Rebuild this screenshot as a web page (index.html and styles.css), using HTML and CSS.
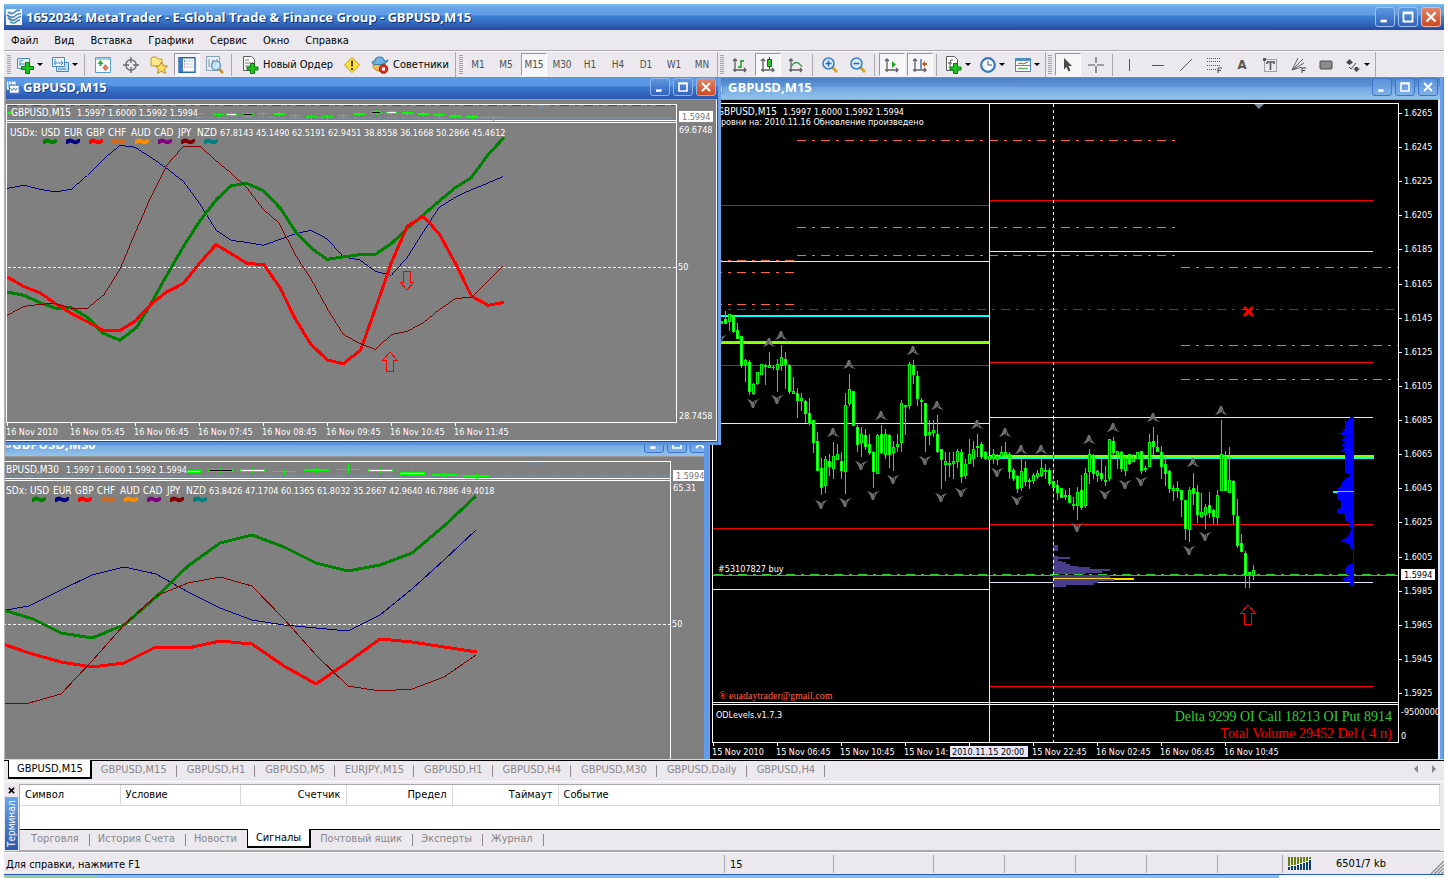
FILE: index.html
```html
<!DOCTYPE html>
<html lang="ru">
<head>
<meta charset="utf-8">
<title>1652034: MetaTrader</title>
<link rel="stylesheet" href="styles.css">
</head>
<body>
<svg class="defs" aria-hidden="true">
  <symbol id="i-min" viewBox="0 0 20 20"><path d="M5 13h7v3H5z" fill="#fff"/></symbol>
  <symbol id="i-max" viewBox="0 0 20 20"><path d="M4 4h12v12H4zM6 7v7h8V7z" fill="#fff" fill-rule="evenodd"/></symbol>
  <symbol id="i-close" viewBox="0 0 20 20"><path d="M5 5l10 10M15 5L5 15" stroke="#fff" stroke-width="2.4"/></symbol>
  <symbol id="i-mdi" viewBox="0 0 16 16"><path d="M1 2h10v9H1z" fill="#fff"/><path d="M2 5h8M3 2v7M6 2v7" stroke="#79a6d8"/><path d="M4 6h11v9H4z" fill="#fff" stroke="#3b74c2"/><path d="M5 9l2 3 2-3 2 3 2-3" fill="none" stroke="#3b74c2"/></symbol>
</svg>

<header class="titlebar">
  <svg class="app-icon" viewBox="0 0 16 16"><path d="M0 0h16v16H0z" fill="#f4f8fc"/><g fill="none" stroke="#4b86b8" stroke-width="1.7"><path d="M2 3q4 3 7 0t5-1"/><path d="M1 6q5 4 8 1t6-2"/><path d="M2 9q5 4 8 1t5-2"/><path d="M4 13q4 2 6 0t4-2"/></g></svg>
  <h1 class="title">1652034: MetaTrader - E-Global Trade &amp; Finance Group - GBPUSD,M15</h1>
  <div class="win-buttons">
    <button class="wb" aria-label="Свернуть"><svg><use href="#i-min"/></svg></button>
    <button class="wb" aria-label="Развернуть"><svg><use href="#i-max"/></svg></button>
    <button class="wb wb-close" aria-label="Закрыть"><svg><use href="#i-close"/></svg></button>
  </div>
</header>

<nav class="menubar">
  <button>Файл</button><button>Вид</button><button>Вставка</button><button>Графики</button><button>Сервис</button><button>Окно</button><button>Справка</button>
</nav>

<div class="toolbars">
  <div class="toolbar standard">
    <span class="grip"></span>
    <button class="tb drop" aria-label="Новый график"><svg viewBox="0 0 18 18"><path d="M1.500 2.500h12v10h-12z" fill="#eaf5fc" stroke="#4b87b8"/><path d="M4 4v6M3 8h9M7 4l-2 1" stroke="#4b87b8" fill="none"/><path d="M9.500 6.500h4v4h4v3h-4v4h-4v-4h-4v-3h4z" fill="#1fc51f" stroke="#08760a"/></svg></button>
    <button class="tb drop" aria-label="Профили"><svg viewBox="0 0 18 18"><path d="M5.500 6.500h12v9h-12z" fill="#bfe0f2" stroke="#4b87b8"/><path d="M1.500 1.500h12v9h-12z" fill="#eaf5fc" stroke="#4b87b8"/><path d="M4 3v6M3 7h9M10 5l2 2-2 2M7 13h8" stroke="#4b87b8" fill="none"/></svg></button>
    <span class="sep"></span>
    <button class="tb" aria-label="Обзор рынка"><svg viewBox="0 0 16 16"><path d="M.5.5h15v15H.5z" fill="#fafdff" stroke="#5ba0cc"/><path d="M1 1h14v2H1z" fill="#9bd0ee"/><path d="M5.500 3l3 4h-2v2h-2V7h-2z" fill="#2fa838"/><path d="M10.500 14l-3-4h2V8h2v2h2z" fill="#f07a55" stroke="#c24d2c" stroke-width=".5"/></svg></button>
    <button class="tb" aria-label="Окно данных"><svg viewBox="0 0 16 16"><circle cx="8" cy="8" r="5.200" fill="none" stroke="#6c6c6c" stroke-width="1.400"/><path d="M8 0v6M8 10v6M0 8h6M10 8h6" stroke="#6c6c6c" stroke-width="1.400"/></svg></button>
    <button class="tb" aria-label="Навигатор"><svg viewBox="0 0 18 18"><path d="M1 3q0-2 2-2h3l2 2h4v7H1z" fill="#fce98c" stroke="#c39a1c"/><path d="M11.500 6l2 3.800 4 .4-3 2.800.9 4.300-3.900-2.100-3.900 2.100.9-4.300-3-2.800 4-.4z" fill="#ffe066" stroke="#b4881a"/></svg></button>
    <button class="tb on" aria-label="Терминал"><svg viewBox="0 0 18 16"><path d="M1 .7h16v14.600H1z" fill="#fff" stroke="#2a66ad" stroke-width="1.400"/><path d="M1 1h4v14H1z" fill="#3d7fc6"/><path d="M8 4h7M8 7h7M8 10h7" stroke="#b5c6d8"/><path d="M6 4h1" stroke="#111"/><path d="M6 7h1M6 10h1" stroke="#e02020"/></svg></button>
    <button class="tb" aria-label="Тестер стратегий"><svg viewBox="0 0 18 18"><path d="M.5.5h13v14H.5z" fill="#e7eef4" stroke="#8aa2b5"/><path d="M3 3v8M5 11l2-7 2 7 2-8" stroke="#7f96a8" fill="none"/><path d="M13 13l4 4" stroke="#c79a38" stroke-width="3"/><circle cx="10" cy="9.500" r="4.500" fill="#c6e5f8" fill-opacity=".85" stroke="#6b9bc0" stroke-width="1.500"/></svg></button>
    <span class="sep"></span>
    <button class="tb wide"><svg viewBox="0 0 18 18"><path d="M2.500.5h8l3 3v11h-11z" fill="#fff" stroke="#5d5d5d"/><path d="M4 4h4M4 7h8M4 10h5" stroke="#777"/><path d="M9.500 7.500h4v3.500H17v3h-3.500v3.500h-4V14H6v-3h3.500z" fill="#1fc51f" stroke="#08760a"/></svg>Новый Ордер</button>
    <button class="tb" aria-label="Предупреждение"><svg viewBox="0 0 16 16"><path d="M8 .5L15.500 8 8 15.500.5 8z" fill="#ffe23c" stroke="#c29300"/><path d="M8 3.500v6" stroke="#5a4500" stroke-width="2"/><path d="M7 11h2v2H7z" fill="#5a4500"/></svg></button>
    <button class="tb wide"><svg viewBox="0 0 18 18"><circle cx="8" cy="9" r="6" fill="#f4bf4a" stroke="#b88422"/><path d="M1 6q1-1 3-1 0-4 4.500-4T13 5q3 0 4-1-1 4-8.500 4.500T1 6z" fill="#6eb4e2" stroke="#2a70a8"/><circle cx="12.500" cy="13" r="4.300" fill="#d6331f" stroke="#951a0c"/><path d="M11 11.500h3v3h-3z" fill="#fff"/></svg>Советники</button>
  </div>
  <div class="toolbar">
    <span class="grip"></span>
    <button class="tb tf">M1</button><button class="tb tf">M5</button><button class="tb tf on">M15</button><button class="tb tf">M30</button><button class="tb tf">H1</button><button class="tb tf">H4</button><button class="tb tf">D1</button><button class="tb tf">W1</button><button class="tb tf">MN</button>
  </div>
  <div class="toolbar compact">
    <span class="grip"></span>
    <button class="tb" aria-label="Бары"><svg viewBox="0 0 16 16"><path d="M3 2v13M1 13h13M1 4l2-2 2 2M12 11l2 2-2 2" fill="none" stroke="#5f5f5f" stroke-width="1.300"/><path d="M9 3v8M9 4h3M6 10h3" stroke="#149a14" stroke-width="1.400"/></svg></button>
    <button class="tb on" aria-label="Свечи"><svg viewBox="0 0 16 16"><path d="M3 2v13M1 13h13M1 4l2-2 2 2M12 11l2 2-2 2" fill="none" stroke="#5f5f5f" stroke-width="1.300"/><path d="M9.500 0v12" stroke="#08760a"/><path d="M7.500 2.500h4v7h-4z" fill="#2ec12e" stroke="#08760a"/></svg></button>
    <button class="tb" aria-label="Линия"><svg viewBox="0 0 16 16"><path d="M3 2v13M1 13h13M1 4l2-2 2 2M12 11l2 2-2 2" fill="none" stroke="#5f5f5f" stroke-width="1.300"/><path d="M3 10q5-9 11 0" fill="none" stroke="#3c9a4c" stroke-width="1.300"/></svg></button>
    <span class="sep"></span>
    <button class="tb" aria-label="Увеличить"><svg viewBox="0 0 16 16"><path d="M10 10l5 5" stroke="#d6a62c" stroke-width="3"/><circle cx="6.500" cy="6.500" r="5.500" fill="#d8eefb" stroke="#3a7cc8" stroke-width="1.500"/><path d="M3.500 6.500h6M6.500 3.500v6" stroke="#2468b8" stroke-width="1.600"/></svg></button>
    <button class="tb" aria-label="Уменьшить"><svg viewBox="0 0 16 16"><path d="M10 10l5 5" stroke="#d6a62c" stroke-width="3"/><circle cx="6.500" cy="6.500" r="5.500" fill="#d8eefb" stroke="#3a7cc8" stroke-width="1.500"/><path d="M3.500 6.500h6" stroke="#2468b8" stroke-width="1.600"/></svg></button>
    <span class="sep"></span>
    <button class="tb on" aria-label="Автопрокрутка"><svg viewBox="0 0 16 16"><path d="M3 2v13M1 13h13M1 4l2-2 2 2M12 11l2 2-2 2" fill="none" stroke="#5f5f5f" stroke-width="1.300"/><path d="M8 4l4 3.500L8 11z" fill="#1fae1f"/></svg></button>
    <button class="tb on" aria-label="Сдвиг графика"><svg viewBox="0 0 16 16"><path d="M3 2v13M1 13h13M1 4l2-2 2 2M12 11l2 2-2 2" fill="none" stroke="#5f5f5f" stroke-width="1.300"/><path d="M9 2v10" stroke="#2a5fb0" stroke-width="1.300"/><path d="M10 7l3-3v2h2v2h-2v2z" fill="#c2521a"/></svg></button>
    <span class="sep"></span>
    <button class="tb drop" aria-label="Индикаторы"><svg viewBox="0 0 18 18"><path d="M2.500.5h8l3 3v11h-11z" fill="#fff" stroke="#5d5d5d"/><path d="M9 4q-3-1-3 2v6M4 7h4" stroke="#555" fill="none"/><path d="M9.500 7.500h4v3.500H17v3h-3.500v3.500h-4V14H6v-3h3.500z" fill="#1fc51f" stroke="#08760a"/></svg></button>
    <button class="tb drop" aria-label="Периоды"><svg viewBox="0 0 16 16"><circle cx="8" cy="8" r="6.800" fill="#f2f9ff" stroke="#3778bd" stroke-width="2.200"/><path d="M8 4v4h4" fill="none" stroke="#555"/></svg></button>
    <button class="tb drop" aria-label="Шаблоны"><svg viewBox="0 0 16 16"><path d="M.5 1.500h15v13H.5z" fill="#fff" stroke="#4b87b8"/><path d="M1 2h14v2H1zM1 8h14v1H1z" fill="#4b94cc"/><path d="M3 7l3-1 2 1 5-2" stroke="#a0522d" fill="none"/><path d="M3 12l3-1 3 1 2-1 2 1" stroke="#2d9a3a" fill="none"/></svg></button>
  </div>
  <div class="toolbar compact">
    <span class="grip"></span>
    <button class="tb on" aria-label="Курсор"><svg viewBox="0 0 16 16"><path d="M4 1l8 8H8.500l2 4.500-2 1L6.500 10 4 12.500z" fill="#4a4a4a"/></svg></button>
    <button class="tb" aria-label="Перекрестие"><svg viewBox="0 0 16 16"><path d="M8 0v6M8 9v7M0 8h7M9 8h7" stroke="#555" stroke-width="1.200"/></svg></button>
    <span class="sep"></span>
    <button class="tb" aria-label="Вертикальная линия"><svg viewBox="0 0 16 16"><path d="M7 2h1v12H7z" fill="#555"/></svg></button>
    <button class="tb" aria-label="Горизонтальная линия"><svg viewBox="0 0 16 16"><path d="M2 8h12v1H2z" fill="#555"/></svg></button>
    <button class="tb" aria-label="Трендовая линия"><svg viewBox="0 0 16 16"><path d="M2 14L14 2" stroke="#555"/></svg></button>
    <button class="tb" aria-label="Фибоначчи"><svg viewBox="0 0 16 16"><path d="M1 1.500h14M1 4.500h14M1 8.500h14M1 12.500h9" stroke="#555" stroke-dasharray="1 1"/><path d="M12 16v-5h4M12 13.500h3" fill="none" stroke="#444"/></svg></button>
    <button class="tb glyph" aria-label="Текст">A</button>
    <button class="tb" aria-label="Метка"><svg viewBox="0 0 16 16"><path d="M2.500 2.500h12v12h-12z" fill="none" stroke="#555" stroke-dasharray="1 1"/><path d="M5 5h7v2M8.500 5v8M5 5v2" stroke="#555" stroke-width="1.600" fill="none"/><path d="M1 1h3v3H1z" fill="#555"/></svg></button>
    <button class="tb" aria-label="Веер"><svg viewBox="0 0 16 16"><path d="M2 13L8 1M2 13L13 2M2 13l12-7M2 13l10-3" stroke="#666"/><path d="M12 16v-5h4M12 13.500h3" fill="none" stroke="#444"/></svg></button>
    <button class="tb" aria-label="Прямоугольник"><svg viewBox="0 0 16 16"><rect x="2" y="4" width="12" height="8" rx="1" fill="#8c8c8c" stroke="#4a4a4a"/></svg></button>
    <button class="tb drop" aria-label="Стрелки"><svg viewBox="0 0 16 16"><path d="M4.500 2l3.500 3.500L4.500 8 1 5.500zM11.500 15L8 11.500h7z" fill="#4a4a4a"/><path d="M10 10h3v2h-3z" fill="#4a4a4a"/><path d="M4 10l2 2 5-6" fill="none" stroke="#4a4a4a"/></svg></button>
  </div>
</div>

<main class="workspace">
  <section class="mdi mdi-m30">
    <div class="mdi-title idle"><svg class="mdi-icon"><use href="#i-mdi"/></svg><h2>GBPUSD,M30</h2>
      <div class="win-buttons"><button class="wb" aria-label="Свернуть"><svg><use href="#i-min"/></svg></button><button class="wb" aria-label="Развернуть"><svg><use href="#i-max"/></svg></button><button class="wb" aria-label="Закрыть"><svg><use href="#i-close"/></svg></button></div></div>
    <svg class="chart"><g id="m30" transform="translate(-3,-457)"></g></svg>
  </section>
  <section class="mdi mdi-main">
    <div class="mdi-title idle"><svg class="mdi-icon"><use href="#i-mdi"/></svg><h2>GBPUSD,M15</h2>
      <div class="win-buttons"><button class="wb" aria-label="Свернуть"><svg><use href="#i-min"/></svg></button><button class="wb" aria-label="Развернуть"><svg><use href="#i-max"/></svg></button><button class="wb" aria-label="Закрыть"><svg><use href="#i-close"/></svg></button></div></div>
    <svg class="chart dark"><g id="main" transform="translate(-710,-100)"></g></svg>
  </section>
  <section class="mdi mdi-m15">
    <div class="mdi-title"><svg class="mdi-icon"><use href="#i-mdi"/></svg><h2>GBPUSD,M15</h2>
      <div class="win-buttons"><button class="wb" aria-label="Свернуть"><svg><use href="#i-min"/></svg></button><button class="wb" aria-label="Развернуть"><svg><use href="#i-max"/></svg></button><button class="wb wb-close" aria-label="Закрыть"><svg><use href="#i-close"/></svg></button></div></div>
    <svg class="chart"><g id="m15" transform="translate(-6,-100)"></g></svg>
  </section>
</main>

<nav class="tabs chart-tabs">
  <button class="active">GBPUSD,M15</button><button>GBPUSD,M15</button><button>GBPUSD,H1</button><button>GBPUSD,M5</button><button>EURJPY,M15</button><button>GBPUSD,H1</button><button>GBPUSD,H4</button><button>GBPUSD,M30</button><button>GBPUSD,Daily</button><button>GBPUSD,H4</button>
  <span class="scroll"><svg viewBox="0 0 24 8"><path d="M4 0v8L0 4zM18 0v8l4-4z" fill="#8a8a8a"/></svg></span>
</nav>

<section class="terminal">
  <div class="side">
    <button class="side-close" aria-label="Закрыть"><svg viewBox="0 0 8 8"><path d="M1 1l6 6M7 1L1 7" stroke="#000" stroke-width="1.800"/></svg></button>
    <span class="side-label">Терминал</span>
  </div>
  <div class="term-body">
    <table class="alerts">
      <colgroup><col class="c1"><col class="c2"><col class="c3"><col class="c3"><col class="c3"><col></colgroup>
      <thead><tr><th>Символ</th><th>Условие</th><th class="num">Счетчик</th><th class="num">Предел</th><th class="num">Таймаут</th><th>Событие</th></tr></thead>
    </table>
    <nav class="tabs term-tabs">
      <button>Торговля</button><button>История Счета</button><button class="before">Новости</button><button class="active">Сигналы</button><button>Почтовый ящик</button><button>Эксперты</button><button>Журнал</button>
    </nav>
  </div>
</section>

<footer class="status">
  <span class="s-help">Для справки, нажмите F1</span>
  <span class="s-a">15</span><span class="s-b"></span><span class="s-c"></span><span class="s-c"></span><span class="s-c"></span><span class="s-c"></span><span class="s-d"></span>
  <span class="s-net"><svg viewBox="0 0 24 13"><path d="M1 0v9M4 0v8M7 0v8M10 0v7M13 0v6M16 0v5M19 0v4M22 0v2" stroke="#66800a" stroke-width="2"/><path d="M1 10v3M4 9v4M7 9v4M10 8v5M13 7v6M16 6v7M19 5v8M22 3v10" stroke="#0a4068" stroke-width="2"/></svg>6501/7 kb</span>
  <svg class="resize" viewBox="0 0 16 16"><path d="M1 16L16 1M5 16L16 5M9 16l7-7M13 16l3-3" stroke="#8f8f8f" stroke-width="1.500"/></svg>
</footer>
<div class="taskbar"><span class="start"></span><span class="tray"></span></div>
<script src="script.js"></script>
</body>
</html>
```

FILE: styles.css
```css
* { box-sizing: border-box; }
body {
  margin: 0;
  padding: 4px 4px 0;
  min-height: 100vh;
  display: flex;
  flex-direction: column;
  background: #fff;
  font: 11px/14px "DejaVu Sans Condensed", "DejaVu Sans", sans-serif;
  color: #000;
  overflow: hidden;
}
button { font: inherit; color: inherit; background: none; border: 0; padding: 0; margin: 0; white-space: nowrap; }
h1, h2 { margin: 0; }
.defs { display: none; }

.titlebar {
  height: 26px;
  display: flex;
  align-items: center;
  gap: 4px;
  padding: 0 3px 0 2px;
  background: linear-gradient(#7cc0ec 0, #68a4e8 15%, #5f9ce6 42%, #3b7fd0 46%, #3672c6 65%, #2c56ae 90%, #284a9c);
}
.app-icon { width: 16px; height: 16px; }
.title, .mdi-title h2 {
  font: bold 13px/18px "Open Sans", sans-serif;
  color: #fff;
  text-shadow: 1px 1px 0 #14306e;
  white-space: nowrap;
}
.win-buttons { margin-left: auto; display: flex; gap: 3px; }
.wb {
  width: 20px;
  height: 20px;
  border: 1px solid #9dc1f0;
  border-radius: 3px;
  background: linear-gradient(#5c98de, #3463bd);
}
.wb svg { display: block; width: 18px; height: 18px; }
.wb-close { background: linear-gradient(#e0856c, #cf4a22); border-color: #f0b8a6; }

.menubar { height: 21px; display: flex; align-items: center; background: #ebe9ed; border-bottom: 1px solid #aaa8ac; }
.menubar button { padding: 1px 8px 0; }
.menubar button:first-child { padding-left: 7px; }

.toolbars { height: 27px; display: flex; background: #ebe9ed; border-top: 1px solid #fff; border-bottom: 1px solid #8b8b8b; }
.toolbar { display: flex; align-items: center; gap: 2px; padding: 0 2px 0 3px; border-right: 1px solid #aaa8ac; }
.grip { width: 4px; height: 20px; background: repeating-linear-gradient(#a6a4a8 0 1px, #ebe9ed 1px 2px); }
.sep { width: 4px; height: 22px; background: linear-gradient(90deg, transparent 1px, #aaa8ac 1px 2px, transparent 2px); }
.standard .sep { width: 5px; }
.compact { padding: 0 1px 0 2px; }
.compact .grip { margin-right: 1px; }
.tb { width: 26px; height: 23px; display: flex; align-items: center; justify-content: center; gap: 4px; }
.tb svg { width: 16px; height: 16px; flex: none; }
.tb svg[viewBox^="0 0 18"] { width: 18px; height: 18px; }
.tb.drop { width: 33px; gap: 3px; }
.tb.drop::after { content: ""; border: 3px solid transparent; border-top-color: #000; border-bottom: 0; }
.tb.wide { width: auto; padding: 0 4px; }
.tb.tf { color: #505050; font-size: 10px; }
.tb.on { border: 1px solid; border-color: #9b999d #fff #fff #9b999d; background: #f6f5f7; }
.tb.glyph { color: #555; font-size: 13px; font-weight: bold; }

.workspace { position: relative; flex: 1; min-height: 400px; overflow: hidden; background: #808080; border-left: 1px solid #b4b4b4; border-bottom: 1px solid #d8d6da; }
.mdi { position: absolute; display: flex; flex-direction: column; overflow: hidden; }
.mdi-title { height: 21px; flex: none; display: flex; align-items: center; gap: 3px; padding: 0 2px 3px 0; background: linear-gradient(#5b9be6 0, #5a96e2 38%, #3a7bcf 42%, #2c54ac); }
.mdi-title.idle { background: linear-gradient(#4c82c4, #5f95d8 40%, #72a6e0 45%, #92c4ea); }
.mdi-title h2 { text-shadow: 1px 1px 0 #1c3c84; }
.mdi-title.idle h2 { text-shadow: none; }
.mdi-title .wb { height: 18px; border-color: #8fb6ec; }
.mdi-title.idle .wb { border-color: #3f74c8; background: linear-gradient(#5b92dc, #7fb0e6); }
.mdi-title .wb svg { height: 16px; }
.mdi-icon { width: 14px; height: 14px; }
.mdi-m15 { left: 0; top: 0; width: 716px; height: 367px; border-left: 1px solid #9a9a9a; border-right: 3px solid #6ba0e4; border-bottom: 3px solid #5b90dc; background: #24489c; }
.mdi-m30 { left: -14px; top: 357px; bottom: 0; width: 733px; border-left: 12px solid #6ba0e4; }
.mdi-m30 .mdi-title { padding-right: 14px; gap: 0; }
.mdi-m30 .mdi-icon { width: 9px; }
.mdi-main { left: 699px; right: 1px; top: 0; bottom: 0; border-left: 5px solid #5f9be6; border-right: 3px solid #6ba0ec; background: #9a9a9a; }
.mdi-main .mdi-title { gap: 5px; }
.chart { flex: 1; min-height: 0; display: block; background: #808080; border-top: 1px solid #9a9a9a; overflow: hidden; }
.mdi-m15 .chart { margin: 0 1px 1px 0; border-right: 1px solid #fff; border-bottom: 1px solid #fff; }
.chart.dark { background: #000; border-left: 1px solid #9a9a9a; border-right: 2px solid #e4e8f4; }
.chart text { font-family: "DejaVu Sans Condensed", "DejaVu Sans", sans-serif; font-size: 9px; fill: #fff; }
.chart text.label { font-size: 10px; }
.chart text.serif { font-family: "Liberation Serif", serif; font-size: 14px; }
.chart text.small { font-size: 10px; }

.tabs { display: flex; background: #ebe9ed; color: #8a888c; border-top: 1px solid #000; }
.tabs button { position: relative; height: 18px; padding: 0 10px; }
.tabs button::after { content: ""; position: absolute; right: 0; top: 4px; height: 12px; border-right: 1px solid #8a888c; }
.tabs button.active { height: 19px; margin-top: -1px; padding: 0 7px 0 8px; background: #fff; color: #000; border: 1px solid #000; border-top: 0; border-right-width: 2px; border-bottom-width: 2px; }
.tabs button.active + button { padding-left: 9px; }
.tabs button.active::after, .tabs button.before::after { display: none; }
.chart-tabs { height: 22px; padding-left: 4px; border-bottom: 1px solid #fff; }
.scroll { margin-left: auto; padding: 2px 6px 0 0; }
.scroll svg { width: 24px; height: 8px; }

.terminal { display: flex; background: #ebe9ed; height: 70px; padding-top: 2px; border-bottom: 1px solid #aaa8ac; }
.side { width: 15px; display: flex; flex-direction: column; align-items: center; }
.side-close { height: 13px; }
.side-close svg { width: 7px; height: 7px; display: block; }
.side-label { flex: 1; width: 13px; writing-mode: vertical-rl; transform: rotate(180deg); line-height: 13px; color: #fff; text-align: center; background: linear-gradient(0deg, #68a6e6, #2c58ac); font-size: 10px; margin-bottom: 1px; }
.term-body { flex: 1; display: flex; flex-direction: column; margin-right: 4px; border: 1px solid #aaa8ac; border-width: 1px 0 1px 1px; background: #fff; }
.alerts { width: 100%; border-collapse: collapse; table-layout: fixed; margin-bottom: auto; }
.alerts th { height: 20px; padding: 1px 5px 0; font-weight: normal; text-align: left; border-bottom: 1px solid #d8d8d8; border-right: 1px solid #d8d8d8; }
.alerts th.num { text-align: right; }
.c1 { width: 100px; }
.c2 { width: 120px; }
.c3 { width: 106px; }
.term-tabs { height: 21px; padding-left: 3px; }
.term-tabs button { padding: 0 11px 0 8px; }
.term-tabs button.before { padding-right: 10px; }
.term-tabs button.active { padding: 0 8px; }

.status { height: 22px; display: flex; align-items: center; background: #ebe9ed; border-top: 1px solid #fff; }
.status > span { height: 18px; padding-left: 5px; border-left: 1px solid #aaa8ac; line-height: 20px; }
.status > .s-help { flex: 1; padding-left: 2px; border: 0; }
.s-a { width: 109px; }
.s-b { width: 100px; }
.s-c { width: 71px; }
.s-d { width: 65px; }
.s-net { width: 148px; display: flex; align-items: center; gap: 24px; }
.s-net svg { width: 24px; height: 13px; }
.resize { width: 14px; height: 14px; align-self: flex-end; }
.taskbar { height: 4px; display: flex; justify-content: space-between; background: #7fc0f0; border-top: 1px solid #2c58b4; }
.start { width: 93px; background: #8fcf9a; border-radius: 0 4px 0 0; }
.tray { width: 165px; background: #f4f8fc; }
```

FILE: script.js
```js
const NS = 'http://www.w3.org/2000/svg';
function add(g, tag, attrs, content) {
  const e = document.createElementNS(NS, tag);
  for (const k in attrs) e.setAttribute(k, attrs[k]);
  if (content !== undefined) e.textContent = content;
  g.appendChild(e);
  return e;
}
const box = (g, x, y, w, h, fill) => add(g, 'rect', { x, y, width: w, height: h, fill, 'shape-rendering': 'crispEdges' });
const hl = (g, x1, x2, y, color, h = 1) => box(g, x1, y, x2 - x1, h, color);
const vl = (g, x, y1, y2, color) => box(g, x, y1, 1, y2 - y1, color);
const dash = (g, x1, y1, x2, y2, color, pattern) =>
  add(g, 'path', { d: `M${x1} ${y1}L${x2} ${y2}`, stroke: color, 'stroke-dasharray': pattern, 'shape-rendering': 'crispEdges' });
const hdash = (g, x1, x2, y, color, pattern = '9 6 3 6') => dash(g, x1, y + 0.5, x2, y + 0.5, color, pattern);
const txt = (g, x, y, s, extra = {}) => add(g, 'text', Object.assign({ x, y }, extra), s);
const label = (g, x, y, s) => txt(g, x, y, s, { class: 'label' });
const curve = (g, pts, color, w) =>
  add(g, 'polyline', { points: pts, fill: 'none', stroke: color, 'stroke-width': w, 'shape-rendering': 'crispEdges' });

const CUR = ['USD', 'EUR', 'GBP', 'CHF', 'AUD', 'CAD', 'JPY', 'NZD'];
const CUR_X = [0, 23, 45, 67, 90, 113, 137, 156];
const CUR_COLORS = ['green', 'navy', 'red', 'chocolate', 'darkorange', 'purple', 'maroon', 'teal'];
/* x is the left edge of the first currency name */
function legend(g, x, y, values) {
  CUR.forEach((c, i) => {
    label(g, x + CUR_X[i], y, c);
    const sx = x + 2 + i * 23, sy = y + 2;
    add(g, 'path', { d: `M${sx} ${sy + 6}v-4q4-3 8 0 3 1 4-1h2v3q-4 4-8 1-3-1-4 1z`, fill: CUR_COLORS[i] });
  });
  values.forEach((v, i) => txt(g, x + 179 + i * 36, y, v));
}
/* strip entries: x, y, width, kind (t thin, k thick, w white body, b black body) */
function strip(g, items) {
  for (const [x, y, w, kind] of items) {
    if (w > 9) vl(g, x + (w >> 1), y - 1, y + 4, '#0f0');
    if (kind === 't') hl(g, x, x + w, y, '#0f0');
    else if (kind === 'k') hl(g, x, x + w, y, '#0f0', 2);
    else {
      box(g, x, y, w, 3, '#0f0');
      hl(g, x + 1, x + w - 1, y + 1, kind === 'w' ? '#fff' : '#000');
    }
  }
}
const arrowUp = (g, x, y) => add(g, 'path', { d: `M${x - 7} ${y + 8}l7-8 7 8h-4v11h-7v-11z`, fill: 'none', stroke: 'red', 'shape-rendering': 'crispEdges' });
const arrowDown = (g, x, y) => add(g, 'path', { d: `M${x - 7} ${y - 8}l7 8 7-8h-4v-11h-7v11z`, fill: 'none', stroke: 'red', 'shape-rendering': 'crispEdges' });

/* GBPUSD,M15 indicator window */
{
  const g = document.getElementById('m15');
  hl(g, 7, 677, 104, '#fff'); hl(g, 7, 677, 120, '#fff'); hl(g, 7, 677, 122, '#fff'); hl(g, 7, 677, 422, '#fff');
  vl(g, 676, 104, 423, '#fff'); vl(g, 6, 104, 423, '#fff');
  hdash(g, 8, 676, 105, 'red'); hdash(g, 195, 676, 117, 'limegreen'); hl(g, 7, 676, 118, '#778899');
  add(g, 'path', { d: 'M536 105h10l-5 5z', fill: '#778899' });
  strip(g, [[7,112,4,'k'],[198,113,7,'t'],[213,114,11,'t'],[226,113,11,'w'],[242,113,11,'b'],[258,113,11,'t'],[274,113,11,'k'],[290,115,11,'t'],[306,116,11,'t'],[322,116,11,'t'],[338,115,11,'t'],[354,113,11,'k'],[371,111,10,'b'],[386,111,11,'w'],[402,112,11,'k'],[418,113,11,'k'],[434,114,11,'k'],[450,115,11,'k'],[466,116,12,'k'],[477,117,32,'t']]);
  label(g, 11, 116, 'GBPUSD,M15'); txt(g, 77, 116, '1.5997 1.6000 1.5992 1.5994');
  box(g, 679, 111, 34, 11, '#fff'); txt(g, 682, 120, '1.5994', { style: 'fill:#777' });
  txt(g, 679, 133, '69.6748'); txt(g, 679, 419, '28.7458'); txt(g, 678, 270, '50');
  label(g, 10, 136, 'USDx:');
  legend(g, 41, 136, ['67.8143','45.1490','62.5191','62.9451','38.8558','36.1668','50.2866','45.4612']);
  hdash(g, 8, 676, 267, '#fff', '3 2');
  const s = add(g, 'g', { transform: 'translate(0,120) scale(.333333)' });
  curve(s, '22,205 72,196 120,208 166,216 214,208 262,166 310,118 360,76 405,82 453,112 500,145 550,184 600,252 648,330 694,361 740,367 790,376 840,358 885,342 932,331 982,357 1030,411 1080,420 1126,454 1174,466 1222,412 1270,335 1318,262 1366,232 1414,209 1462,190 1510,169', 'navy', 3);
  curve(s, '22,516 72,526 120,548 168,565 214,563 262,592 310,640 360,661 410,622 445,565 498,470 550,380 600,302 650,238 694,197 740,190 790,212 842,266 890,340 938,388 982,418 1030,411 1078,404 1128,402 1175,370 1222,325 1270,285 1318,243 1366,203 1414,173 1465,103 1512,53', 'green', 9);
  curve(s, '22,471 72,500 120,518 168,552 214,580 262,605 310,631 360,631 405,604 455,550 500,516 550,490 600,428 648,374 694,401 740,430 792,434 840,503 885,595 932,672 982,720 1030,731 1082,690 1130,555 1174,428 1222,318 1270,289 1318,342 1366,430 1415,529 1465,556 1512,547', 'red', 9);
  curve(s, '22,586 72,559 120,553 166,550 214,565 262,565 312,524 360,448 405,340 453,230 500,136 550,79 600,79 648,122 694,160 740,203 790,268 838,310 885,403 932,475 982,566 1030,643 1080,671 1126,688 1174,644 1222,634 1270,608 1318,569 1366,536 1415,531 1462,485 1510,438', 'maroon', 3);
  arrowDown(g, 407, 290); arrowUp(g, 390, 352);
  ['16 Nov 2010','16 Nov 05:45','16 Nov 06:45','16 Nov 07:45','16 Nov 08:45','16 Nov 09:45','16 Nov 10:45','16 Nov 11:45'].forEach((t, i) => {
    vl(g, 7 + i * 64, 422, 426, '#fff'); txt(g, 6 + i * 64, 435, t);
  });
}

/* GBPUSD,M30 indicator window */
{
  const g = document.getElementById('m30');
  hl(g, 0, 671, 461, '#fff'); hl(g, 0, 671, 478, '#fff'); hl(g, 0, 671, 480, '#fff');
  vl(g, 670, 461, 770, '#fff');
  hdash(g, 0, 670, 475, 'limegreen'); hl(g, 0, 670, 476, '#778899');
  add(g, 'path', { d: 'M529 462h10l-5 5z', fill: '#778899' });
  strip(g, [[187,470,14,'w'],[208,469,25,'b'],[240,469,25,'w'],[272,471,25,'t'],[304,469,25,'k'],[336,469,25,'t'],[368,469,25,'w'],[400,472,25,'w'],[432,474,25,'k'],[464,475,25,'k']]);
  vl(g, 348, 463, 469, '#0f0');
  label(g, 6, 473, 'BPUSD,M30'); txt(g, 66, 473, '1.5997 1.6000 1.5992 1.5994');
  box(g, 673, 470, 32, 11, '#fff'); txt(g, 676, 479, '1.5994', { style: 'fill:#777' });
  txt(g, 673, 491, '65.31'); txt(g, 672, 627, '50');
  label(g, 6, 494, 'SDx:');
  legend(g, 30, 494, ['63.8426','47.1704','60.1365','61.8032','35.2667','42.9640','46.7886','49.4018']);
  hdash(g, 3, 670, 624, '#fff', '3 2');
  curve(g, '0,611 29,606 61,590 92,575 124,567 156,574 188,592 220,608 252,620 284,625 316,628 348,631 380,615 412,589 444,560 476,530', 'navy', 1);
  curve(g, '0,609 33,619 61,633 92,638 124,625 156,597 188,566 220,543 252,535 284,547 316,563 348,571 380,565 412,553 444,526 476,496', 'green', 3);
  curve(g, '0,643 29,653 61,662 92,667 124,663 156,647 188,648 220,641 252,644 284,666 316,684 348,662 380,639 412,642 444,647 477,652', 'red', 3);
  curve(g, '0,703 29,703 61,694 92,661 124,625 156,596 188,583 220,577 252,586 284,619 316,655 348,686 380,691 412,689 444,677 476,655', 'maroon', 1);
}

/* GBPUSD,M15 price window */
{
  const g = document.getElementById('main');
  hl(g, 712, 1399, 103, '#fff'); hl(g, 712, 1399, 702, '#fff'); hl(g, 712, 1399, 704, '#fff'); hl(g, 712, 1399, 742, '#fff');
  vl(g, 712, 103, 743, '#fff'); vl(g, 1398, 103, 743, '#fff');
  const W = '#e6e6fa';
  hl(g, 713, 989, 205, 'red'); hl(g, 713, 989, 261, W); hl(g, 713, 989, 315, 'cyan', 2);
  hl(g, 713, 989, 341, '#7fff00', 2); hl(g, 713, 989, 343, 'gold'); hl(g, 713, 989, 365, 'red');
  hl(g, 713, 989, 423, W); hl(g, 713, 989, 528, 'red'); hl(g, 713, 989, 589, W);
  for (const y of [200, 362, 524, 686]) hl(g, 990, 1373, y, 'red');
  for (const y of [251, 417, 582]) hl(g, 990, 1373, y, W);
  hl(g, 990, 1374, 455, '#7fff00', 2); hl(g, 990, 1374, 457, 'cyan', 2);
  for (const y of [140, 227, 255]) hdash(g, 797, 1175, y, 'tomato');
  for (const y of [260, 272, 304]) hdash(g, 713, 797, y, 'tomato');
  for (const y of [267, 345, 379]) hdash(g, 1181, 1398, y, 'tomato');
  hdash(g, 713, 1398, 309, 'red');
  hdash(g, 714, 1398, 574, 'limegreen'); hl(g, 713, 1398, 575, '#778899');
  vl(g, 989, 104, 742, W);

  for (const [y, h, w] of [[545,6,4],[556,1,4],[557,2,16],[559,2,4],[561,1,8],[562,2,12],[564,2,16],[566,1,24],[567,2,36],[569,2,56],[571,2,48],[573,1,32],[575,3,56],[579,2,60],[581,2,44],[583,2,40],[585,2,12]])
    box(g, 1054, y, w, h, '#483d8b');
  hl(g, 1054, 1134, 578, 'gold'); hl(g, 1114, 1134, 579, 'gold');
  vl(g, 1053, 415, 590, '#483d8b');
  dash(g, 1053.5, 104, 1053.5, 742, '#fff', '3 3');

  const PROFILE = '52,450 60,445 65,437 75,433 85,436 90,424 95,436 100,412 104,424 107,436 120,424 128,436 135,424 142,436 155,424 158,436 220,436 222,450 228,450 236,438 246,426 260,424 264,414 278,412 298,412 303,424 320,424 328,412 338,412 341,436 362,436 365,448 380,450 385,455 395,450 405,448 415,436 420,424 425,424 430,448 445,450 447,460 490,460 492,450 505,436 520,436 524,450 533,436 538,424 543,436 548,450 556,450 560,459';
  const pts = PROFILE.split(' ').map(p => { const [y, x] = p.split(','); return `${1200 + x / 3},${400 + y / 3}`; });
  add(g, 'polygon', { points: ['1354,417', ...pts, '1354,587'].join(' '), fill: 'blue', 'shape-rendering': 'crispEdges' });
  hl(g, 1333, 1354, 491, 'cyan'); hl(g, 1333, 1338, 492, 'cyan');

  /* candles: high, body top, body bottom, low (thirds of a pixel), f = falling */
  const A = '63,87,101,101f 72,72,95,123 78,78,125,131f 99,120,146,146f 139,139,227,234f 207,210,224,276 210,217,305,315f 279,282,311,315 246,247,281,285 222,223,254,257 224,226,228,285 186,226,233,234 225,231,233,242 207,222,239,306 165,202,227,245 186,207,224,297f 222,226,305,314f 261,304,311,314 294,309,332,384f 310,325,332,363 330,334,369,399f 324,369,400,406f 390,391,458,489f 427,454,541,543f 504,535,592,617f 498,507,587,609 492,514,529,558f 456,499,535,567 462,492,508,510 486,514,541,567f 309,346,544,612 252,297,341,348 303,304,406,408f 406,411,464,486f 411,432,458,501 417,435,469,482f 432,462,487,495f 484,486,544,594f 432,435,550,552 405,433,488,494f 417,433,492,507 432,435,492,536f 453,472,487,543 432,462,470,486 330,340,458,486 345,346,348,435 216,222,347,357 210,226,253,282f 243,259,326,348f 324,331,333,399 339,340,436,486f 390,426,434,465 390,421,427,443 375,433,485,489f 477,478,508,597f 486,514,523,573 486,520,523,561 486,514,521,567 477,484,515,534 477,487,559,581f 507,522,557,567 447,492,520,522 453,478,505,531 432,468,472,501 456,463,498,507f 483,486,505,510f';
  const B = '198,200,207,208 177,192,204,222 192,199,207,225 168,186,200,204 156,187,194,207 186,193,243,267f 234,241,266,273f 255,259,295,309f 207,244,293,303 213,235,273,289f 264,270,274,297 249,256,272,282 240,250,259,267 207,235,256,261 222,240,243,267 234,241,281,288f 273,274,292,294f 270,286,308,330f 294,295,323,324f 300,316,320,330 294,316,338,339f 321,343,345,360 291,307,346,390 255,301,353,360f 234,250,347,354 177,193,244,282 192,196,251,267f 240,244,256,276 207,250,265,273f 228,271,273,288 147,148,265,273 141,154,187,201f 183,184,194,237 183,186,236,246f 198,205,241,258 192,193,220,225f 192,206,214,216 186,187,205,207 183,184,242,252f 228,235,237,246 132,157,229,231 111,154,170,195f 135,172,184,186f 168,187,230,267f 198,223,250,288f 240,244,296,309f 285,294,301,333 273,294,301,324 300,301,329,381f 330,331,416,450f 291,301,419,456 249,295,311,345f 285,307,374,399f 309,367,380,384 342,352,374,417 306,346,367,384f 357,361,380,404f 300,316,383,404 90,193,301,303 183,199,301,303f 171,271,307,309 270,274,374,404f 327,379,467,476f 432,460,485,486f 483,490,553,594f 546,547,549,594 525,541,556,570';
  const parse = (s, base) => s.split(' ').map(c => ({ f: c.endsWith('f'), v: c.replace('f', '').split(',').map(n => Math.floor(base + n / 3)) }));
  parse(A, 290).concat(parse(B, 390)).forEach(({ f, v: [hi, top, bot, lo] }, i) => {
    const x = 725 + i * 4;
    vl(g, x, hi, Math.max(lo, hi + 1), '#0f0');
    box(g, x - 1, top, 3, Math.max(bot - top + 1, 1), '#0f0');
    if (bot - top > 1) box(g, x, top + 1, 1, bot - top - 1, f ? '#fff' : '#000');
  });
  box(g, 721, 321, 2, 3, '#0f0');

  const UP = [[177,158],[212,137],[417,224],[369,428],[513,377],[608,182],[681,347],[800,404]];
  const DN = [[129,338],[201,328],[333,641],[405,635],[453,524],[489,616],[549,566],[645,509],[693,620],[753,605],[861,547],[30,148]];
  const UP2 = [[75,128],[123,179],[183,179],[327,149],[399,113],[519,83],[639,220],[723,62]];
  const DN2 = [[111,331],[291,412],[375,311],[435,281],[483,274],[627,479],[675,439]];
  const fractal = (x, y, d) => add(g, 'path', { d: 'M-1-5H1L2-2 4 2 7 4 3 3 0 1-3 3-6 4-3 0zM1-2V1L2 1z', fill: '#6e6e6e', 'fill-rule': 'evenodd', transform: `translate(${x},${y}) scale(1,${d})` });
  UP.forEach(([x, y]) => fractal(710 + Math.round(x / 3), 290 + Math.round(y / 3), 1));
  DN.forEach(([x, y]) => fractal(710 + Math.round(x / 3), 290 + Math.round(y / 3), -1));
  UP2.forEach(([x, y]) => fractal(980 + Math.round(x / 3), 390 + Math.round(y / 3), 1));
  DN2.forEach(([x, y]) => fractal(980 + Math.round(x / 3), 390 + Math.round(y / 3), -1));

  add(g, 'path', { d: 'M1244 307l9 9M1253 307l-9 9', stroke: 'red', 'stroke-width': 3 });
  arrowUp(g, 1248, 605);
  add(g, 'path', { d: 'M1254 104h10l-5 5z', fill: '#778899' });

  for (let i = 0; i < 18; i++) {
    const y = Math.round(113 + i * 34.12);
    hl(g, 1399, 1402, y, '#fff');
    txt(g, 1404, y + 3, (1.6265 - i * 0.002).toFixed(4));
  }
  box(g, 1401, 569, 34, 11, '#fff'); txt(g, 1404, 578, '1.5994', { style: 'fill:#000' });
  txt(g, 1401, 715, '-9500000'); txt(g, 1401, 739, '0');
  label(g, 717, 115, 'GBPUSD,M15'); txt(g, 783, 115, '1.5997 1.6000 1.5992 1.5994');
  txt(g, 716, 125, 'Уровни на: 2010.11.16 Обновление произведено');
  txt(g, 718, 572, '#53107827 buy');
  txt(g, 719, 699, '® euadaytrader@gmail.com', { class: 'serif small', style: 'fill:tomato' });
  txt(g, 716, 718, 'ODLevels.v1.7.3');
  txt(g, 1392, 721, 'Delta 9299 OI Call 18213 OI Put 8914', { class: 'serif', 'text-anchor': 'end', style: 'fill:limegreen' });
  txt(g, 1392, 738, 'Total Volume 29452 Del ( 4 п)', { class: 'serif', 'text-anchor': 'end', style: 'fill:red' });
  ['15 Nov 2010','15 Nov 06:45','15 Nov 10:45','15 Nov 14:','','15 Nov 22:45','16 Nov 02:45','16 Nov 06:45','16 Nov 10:45'].forEach((t, i) => {
    vl(g, 713 + i * 64, 742, 746, '#fff');
    if (t) txt(g, 712 + i * 64, 755, t);
  });
  box(g, 950, 746, 78, 11, W); txt(g, 952, 755, '2010.11.15 20:00', { style: 'fill:#000' });
}
```
